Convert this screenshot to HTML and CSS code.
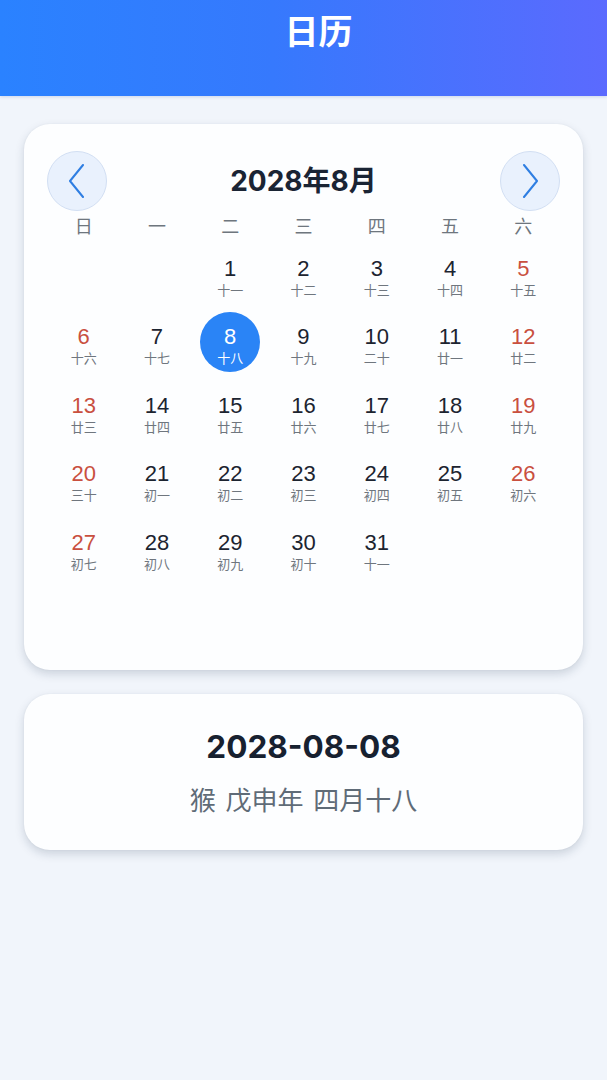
FILE: index.html
```html
<!DOCTYPE html>
<html lang="zh">
<head>
<meta charset="utf-8">
<title>日历</title>
<link rel="stylesheet" href="styles.css">
</head>
<body>
<header class="topbar"><h1 class="topbar-title">日历</h1></header>
<main class="content">
  <section class="card calendar">
    <div class="cal-head">
      <button class="nav-btn" aria-label="上个月">
        <svg width="20" height="34" viewBox="0 0 20 34"><path d="M16 1 L3 17 L16 33" fill="none" stroke="#2f7ee2" stroke-width="2" stroke-linecap="round" stroke-linejoin="round"/></svg>
      </button>
      <div class="cal-title">2028年8月</div>
      <button class="nav-btn" aria-label="下个月">
        <svg width="20" height="34" viewBox="0 0 20 34"><path d="M4 1 L17 17 L4 33" fill="none" stroke="#2f7ee2" stroke-width="2" stroke-linecap="round" stroke-linejoin="round"/></svg>
      </button>
    </div>
    <div class="weekdays">
      <span>日</span><span>一</span><span>二</span><span>三</span><span>四</span><span>五</span><span>六</span>
    </div>
    <div class="days">
      <div class="day empty"></div>
      <div class="day empty"></div>
      <div class="day"><span class="num">1</span><span class="lunar">十一</span></div>
      <div class="day"><span class="num">2</span><span class="lunar">十二</span></div>
      <div class="day"><span class="num">3</span><span class="lunar">十三</span></div>
      <div class="day"><span class="num">4</span><span class="lunar">十四</span></div>
      <div class="day weekend"><span class="num">5</span><span class="lunar">十五</span></div>

      <div class="day weekend"><span class="num">6</span><span class="lunar">十六</span></div>
      <div class="day"><span class="num">7</span><span class="lunar">十七</span></div>
      <div class="day selected"><span class="num">8</span><span class="lunar">十八</span></div>
      <div class="day"><span class="num">9</span><span class="lunar">十九</span></div>
      <div class="day"><span class="num">10</span><span class="lunar">二十</span></div>
      <div class="day"><span class="num">11</span><span class="lunar">廿一</span></div>
      <div class="day weekend"><span class="num">12</span><span class="lunar">廿二</span></div>

      <div class="day weekend"><span class="num">13</span><span class="lunar">廿三</span></div>
      <div class="day"><span class="num">14</span><span class="lunar">廿四</span></div>
      <div class="day"><span class="num">15</span><span class="lunar">廿五</span></div>
      <div class="day"><span class="num">16</span><span class="lunar">廿六</span></div>
      <div class="day"><span class="num">17</span><span class="lunar">廿七</span></div>
      <div class="day"><span class="num">18</span><span class="lunar">廿八</span></div>
      <div class="day weekend"><span class="num">19</span><span class="lunar">廿九</span></div>

      <div class="day weekend"><span class="num">20</span><span class="lunar">三十</span></div>
      <div class="day"><span class="num">21</span><span class="lunar">初一</span></div>
      <div class="day"><span class="num">22</span><span class="lunar">初二</span></div>
      <div class="day"><span class="num">23</span><span class="lunar">初三</span></div>
      <div class="day"><span class="num">24</span><span class="lunar">初四</span></div>
      <div class="day"><span class="num">25</span><span class="lunar">初五</span></div>
      <div class="day weekend"><span class="num">26</span><span class="lunar">初六</span></div>

      <div class="day weekend"><span class="num">27</span><span class="lunar">初七</span></div>
      <div class="day"><span class="num">28</span><span class="lunar">初八</span></div>
      <div class="day"><span class="num">29</span><span class="lunar">初九</span></div>
      <div class="day"><span class="num">30</span><span class="lunar">初十</span></div>
      <div class="day"><span class="num">31</span><span class="lunar">十一</span></div>
    </div>
  </section>
  <section class="card detail">
    <div class="detail-date">2028-08-08</div>
    <div class="detail-lunar">猴 戊申年 四月十八</div>
  </section>
</main>
</body>
</html>
```
FILE: styles.css
```css
* { box-sizing: border-box; }
html, body {
  margin: 0;
  padding: 0;
}
body {
  width: 607px;
  min-height: 1080px;
  background: #f1f5fb;
  font-family: "Noto Sans CJK SC", sans-serif;
  color: #1a2230;
}
.topbar {
  height: 96px;
  padding-left: 30px;
  background: linear-gradient(90deg, #2a82ff 0%, #3679fd 45%, #5b6afe 100%);
  box-shadow: 0 1px 3px rgba(40, 80, 160, 0.18);
  display: flex;
  justify-content: center;
}
.topbar-title {
  margin: 0;
  font-size: 34px;
  font-weight: 700;
  line-height: 60px;
  color: #ffffff;
}
.content {
  padding: 28px 24px 0;
  display: flex;
  flex-direction: column;
  gap: 24px;
}
.card {
  background: #fdfeff;
  border-radius: 26px;
  box-shadow: 0 4px 10px rgba(20, 40, 70, 0.17), 0 0 2px rgba(20, 40, 70, 0.06);
}
.calendar {
  padding: 27px 23px 24px;
}
.cal-head {
  height: 60px;
  display: flex;
  align-items: center;
  justify-content: space-between;
}
.nav-btn {
  width: 60px;
  height: 60px;
  border-radius: 50%;
  background: #e9f1fd;
  border: 1px solid #d2dff3;
  padding: 0;
  display: flex;
  align-items: center;
  justify-content: center;
}
.cal-title {
  font-family: Inter, "Noto Sans CJK SC", sans-serif;
  font-size: 28px;
  font-weight: 700;
  color: #1a2434;
  line-height: 40px;
}
.weekdays {
  display: grid;
  grid-template-columns: repeat(7, 1fr);
  height: 28px;
  align-items: center;
  text-align: center;
  font-size: 18px;
  line-height: 28px;
  color: #6e767e;
}
.days {
  margin-top: 4.5px;
  display: grid;
  grid-template-columns: repeat(7, 1fr);
  grid-template-rows: repeat(6, 60px);
  row-gap: 8.5px;
}
.day {
  width: 60px;
  height: 60px;
  justify-self: center;
  border-radius: 50%;
  display: flex;
  flex-direction: column;
  align-items: center;
  padding-top: 13px;
}
.num {
  display: block;
  height: 24px;
  font-family: "Liberation Sans", "Noto Sans CJK SC", sans-serif;
  font-size: 22px;
  line-height: 24px;
  color: #1c2430;
}
.lunar {
  display: block;
  height: 16px;
  margin-top: 1px;
  font-size: 13px;
  line-height: 16px;
  color: #6f767e;
}
.weekend .num {
  color: #c9503f;
}
.selected {
  background: #2a84f6;
}
.selected .num,
.selected .lunar {
  color: #ffffff;
}
.detail {
  height: 156px;
  padding-top: 32px;
  display: flex;
  flex-direction: column;
  align-items: center;
}
.detail-date {
  font-family: Inter, "Noto Sans CJK SC", sans-serif;
  font-size: 31.5px;
  font-weight: 700;
  line-height: 42px;
  color: #172130;
}
.detail-lunar {
  margin-top: 14px;
  font-size: 26px;
  line-height: 34px;
  word-spacing: 4px;
  color: #5f6b77;
}
```
